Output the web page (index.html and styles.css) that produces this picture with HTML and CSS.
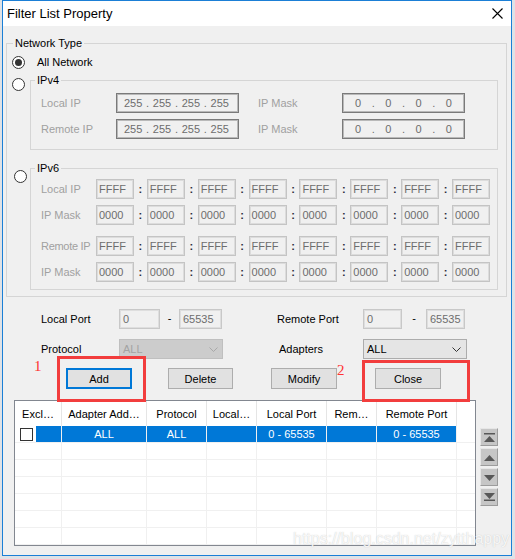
FILE: index.html
```html
<!DOCTYPE html>
<html lang="en">
<head>
    <meta charset="UTF-8">
    <title>Filter List Property</title>
    <link rel="stylesheet" href="styles.css">
</head>
<body>
<div class="window">
    <div class="titlebar">
        <span class="title">Filter List Property</span>
        <svg class="close" width="11" height="11" viewBox="0 0 11 11">
            <path d="M0.5 0.5L10.5 10.5M10.5 0.5L0.5 10.5" stroke="#000" stroke-width="1.1" fill="none"/>
        </svg>
    </div>

    <fieldset class="group">
        <legend>Network Type</legend>
        <div class="group-body">
            <div class="option-row">
                <span class="radio checked"></span>
                <span class="option-label">All Network</span>
            </div>

            <div class="net-option">
                <span class="radio"></span>
                <fieldset class="sub-group">
                    <legend>IPv4</legend>
                    <div class="v4-body">
                        <div class="v4-row">
                            <span class="dim">Local IP</span>
                            <div class="ip-box"><span>255</span><span>.</span><span>255</span><span>.</span><span>255</span><span>.</span><span>255</span></div>
                            <span class="dim mask-label">IP Mask</span>
                            <div class="ip-box mask"><span>0</span><span>.</span><span>0</span><span>.</span><span>0</span><span>.</span><span>0</span></div>
                        </div>
                        <div class="v4-row">
                            <span class="dim">Remote IP</span>
                            <div class="ip-box"><span>255</span><span>.</span><span>255</span><span>.</span><span>255</span><span>.</span><span>255</span></div>
                            <span class="dim mask-label">IP Mask</span>
                            <div class="ip-box mask"><span>0</span><span>.</span><span>0</span><span>.</span><span>0</span><span>.</span><span>0</span></div>
                        </div>
                    </div>
                </fieldset>
            </div>

            <div class="net-option v6">
                <span class="radio"></span>
                <fieldset class="sub-group">
                    <legend>IPv6</legend>
                    <div class="v6-body">
                        <div class="v6-row">
                            <span class="dim">Local IP</span>
                            <span class="hex">FFFF</span><span class="colon">:</span>
                            <span class="hex">FFFF</span><span class="colon">:</span>
                            <span class="hex">FFFF</span><span class="colon">:</span>
                            <span class="hex">FFFF</span><span class="colon">:</span>
                            <span class="hex">FFFF</span><span class="colon">:</span>
                            <span class="hex">FFFF</span><span class="colon">:</span>
                            <span class="hex">FFFF</span><span class="colon">:</span>
                            <span class="hex">FFFF</span>
                        </div>
                        <div class="v6-row">
                            <span class="dim">IP Mask</span>
                            <span class="hex">0000</span><span class="colon">:</span>
                            <span class="hex">0000</span><span class="colon">:</span>
                            <span class="hex">0000</span><span class="colon">:</span>
                            <span class="hex">0000</span><span class="colon">:</span>
                            <span class="hex">0000</span><span class="colon">:</span>
                            <span class="hex">0000</span><span class="colon">:</span>
                            <span class="hex">0000</span><span class="colon">:</span>
                            <span class="hex">0000</span>
                        </div>
                        <div class="v6-row split">
                            <span class="dim tight">Remote IP</span>
                            <span class="hex">FFFF</span><span class="colon">:</span>
                            <span class="hex">FFFF</span><span class="colon">:</span>
                            <span class="hex">FFFF</span><span class="colon">:</span>
                            <span class="hex">FFFF</span><span class="colon">:</span>
                            <span class="hex">FFFF</span><span class="colon">:</span>
                            <span class="hex">FFFF</span><span class="colon">:</span>
                            <span class="hex">FFFF</span><span class="colon">:</span>
                            <span class="hex">FFFF</span>
                        </div>
                        <div class="v6-row">
                            <span class="dim">IP Mask</span>
                            <span class="hex">0000</span><span class="colon">:</span>
                            <span class="hex">0000</span><span class="colon">:</span>
                            <span class="hex">0000</span><span class="colon">:</span>
                            <span class="hex">0000</span><span class="colon">:</span>
                            <span class="hex">0000</span><span class="colon">:</span>
                            <span class="hex">0000</span><span class="colon">:</span>
                            <span class="hex">0000</span><span class="colon">:</span>
                            <span class="hex">0000</span>
                        </div>
                    </div>
                </fieldset>
            </div>
        </div>
    </fieldset>

    <div class="port-row">
        <span class="lbl w78">Local Port</span>
        <span class="field w41">0</span>
        <span class="dash w19">-</span>
        <span class="field w43">65535</span>
        <span class="lbl w86 ml55">Remote Port</span>
        <span class="field w39">0</span>
        <span class="dash w24">-</span>
        <span class="field w39">65535</span>
    </div>

    <div class="port-row second">
        <span class="lbl w78">Protocol</span>
        <div class="combo disabled">
            <span>ALL</span>
            <svg width="9" height="5" viewBox="0 0 9 5"><polyline points="0.5,0.5 4.5,4.5 8.5,0.5" fill="none" stroke="#a8a8a8"/></svg>
        </div>
        <span class="lbl w84 ml56">Adapters</span>
        <div class="combo">
            <span>ALL</span>
            <svg width="9" height="5" viewBox="0 0 9 5"><polyline points="0.5,0.5 4.5,4.5 8.5,0.5" fill="none" stroke="#333"/></svg>
        </div>
    </div>

    <div class="button-row">
        <button class="btn default">Add</button>
        <button class="btn">Delete</button>
        <button class="btn">Modify</button>
        <button class="btn">Close</button>
    </div>

    <div class="list-area">
        <div class="listview">
            <div class="lv-head">
                <span>Excl…</span>
                <span>Adapter Add…</span>
                <span>Protocol</span>
                <span>Local…</span>
                <span>Local Port</span>
                <span>Rem…</span>
                <span>Remote Port</span>
                <span></span>
            </div>
            <div class="lv-row selected">
                <span class="first"><i class="check"></i><i class="sel-strip"></i></span>
                <span>ALL</span>
                <span>ALL</span>
                <span></span>
                <span>0 - 65535</span>
                <span></span>
                <span>0 - 65535</span>
                <span></span>
            </div>
            <div class="lv-row"><span></span><span></span><span></span><span></span><span></span><span></span><span></span><span></span></div>
            <div class="lv-row"><span></span><span></span><span></span><span></span><span></span><span></span><span></span><span></span></div>
            <div class="lv-row"><span></span><span></span><span></span><span></span><span></span><span></span><span></span><span></span></div>
            <div class="lv-row"><span></span><span></span><span></span><span></span><span></span><span></span><span></span><span></span></div>
            <div class="lv-row"><span></span><span></span><span></span><span></span><span></span><span></span><span></span><span></span></div>
            <div class="lv-row"><span></span><span></span><span></span><span></span><span></span><span></span><span></span><span></span></div>
        </div>
        <div class="scroll-btns">
            <span class="sbtn"><svg width="16" height="16" viewBox="0 0 16 16"><rect x="3" y="4" width="11" height="1.5" fill="#585858"/><polygon points="3,13 14,13 8.5,7" fill="#585858"/></svg></span>
            <span class="sbtn"><svg width="16" height="16" viewBox="0 0 16 16"><polygon points="3,12 14,12 8.5,6" fill="#585858"/></svg></span>
            <span class="sbtn"><svg width="16" height="16" viewBox="0 0 16 16"><polygon points="3,6 14,6 8.5,12" fill="#585858"/></svg></span>
            <span class="sbtn"><svg width="16" height="16" viewBox="0 0 16 16"><polygon points="3,4 14,4 8.5,10" fill="#585858"/><rect x="3" y="10.5" width="11" height="1.5" fill="#585858"/></svg></span>
        </div>
    </div>

    <!-- annotations drawn over the dialog -->
    <span class="mark-num one">1</span>
    <span class="mark-box box-add"></span>
    <span class="mark-num two">2</span>
    <span class="mark-box box-close"></span>
    <span class="watermark">https://blog.csdn.net/zytthappy</span>
</div>
</body>
</html>
```

FILE: styles.css
```css
* {
    box-sizing: border-box;
}
body {
    margin: 0;
    background-color: #dfe2e6;
    font-family: "Liberation Sans", Arial, sans-serif;
    font-size: 11px;
    color: #000;
}
.window {
    position: relative;
    margin-left: 2px;
    width: 510px;
    height: 556px;
    border: 1px solid #1b7fd6;
    background-color: #f0f0f0;
}
.titlebar {
    height: 25px;
    background-color: #fff;
    display: flex;
    align-items: center;
    justify-content: space-between;
    padding: 0 8px 0 4px;
}
.title {
    font-size: 13px;
}

/* group boxes */
.group {
    margin: 10px 4px 0 3px;
    padding: 0;
    border: 1px solid #d5d5d5;
    min-width: 0;
}
.group > legend {
    margin-left: 6px;
    padding: 0 2px;
    line-height: 14px;
}
.group-body {
    padding: 0 8px 6px 5px;
}
.option-row {
    display: flex;
    align-items: center;
    height: 14px;
    margin-top: 5px;
}
.option-label {
    margin-left: 12px;
}
.radio {
    width: 13px;
    height: 13px;
    border: 1px solid #333;
    border-radius: 50%;
    background-color: #fff;
    display: flex;
    align-items: center;
    justify-content: center;
}
.radio.checked::after {
    content: "";
    width: 7px;
    height: 7px;
    border-radius: 50%;
    background-color: #333;
}
.net-option {
    display: grid;
    grid-template-columns: 18px 1fr;
    align-items: start;
    margin-top: 4px;
}
.net-option .radio {
    margin-top: 5px;
}
.net-option.v6 {
    margin-top: 11px;
}
.net-option.v6 .radio {
    margin-top: 9px;
    margin-left: 2px;
}
.sub-group {
    margin: 0;
    padding: 0;
    border: 1px solid #d5d5d5;
    min-width: 0;
}
.sub-group legend {
    margin-left: 4px;
    padding: 0 2px;
    line-height: 14px;
}
.dim {
    color: #a0a0a0;
    white-space: nowrap;
}
.dim.tight {
    letter-spacing: -0.3px;
}

/* ipv4 */
.v4-body {
    padding: 6px 7px 10px 10px;
}
.v4-row {
    display: grid;
    grid-template-columns: 75px 123px 103px 123px;
    height: 20px;
    align-items: center;
}
.v4-row + .v4-row {
    margin-top: 6px;
}
.mask-label {
    padding-left: 19px;
}
.ip-box {
    height: 20px;
    display: flex;
    align-items: center;
    justify-content: space-between;
    padding: 0 9px 0 7px;
    border: 1px solid #7a7a7a;
    box-shadow: inset 0 0 0 1px #b9b9b9;
    color: #6d6d6d;
}
.ip-box.mask {
    padding: 0 12px;
}

/* ipv6 */
.v6-body {
    padding: 4px 7px 7px 10px;
}
.v6-row {
    display: grid;
    grid-template-columns: 55px repeat(7, 38px 1fr) 38px;
    height: 20px;
    align-items: center;
}
.v6-row + .v6-row {
    margin-top: 6px;
}
.v6-row.split {
    margin-top: 11px;
}
.hex {
    height: 20px;
    display: flex;
    align-items: center;
    padding-left: 2px;
    border: 1px solid #c4c4c4;
    box-shadow: inset 0 0 0 1px #dcdcdc;
    color: #6d6d6d;
}
.colon {
    text-align: center;
    font-weight: bold;
    color: #2a2a3a;
}

/* ports / protocol */
.port-row {
    display: flex;
    align-items: center;
    height: 20px;
    margin: 12px 0 0 38px;
}
.port-row.second {
    margin-top: 10px;
}
.lbl {
    white-space: nowrap;
}
.w78 { width: 78px; }
.w84 { width: 84px; }
.w86 { width: 86px; }
.w41 { width: 41px; }
.w43 { width: 43px; }
.w39 { width: 39px; }
.w19 { width: 19px; }
.w24 { width: 24px; }
.ml55 { margin-left: 55px; }
.ml56 { margin-left: 56px; }
.field {
    height: 20px;
    display: flex;
    align-items: center;
    padding-left: 3px;
    border: 1px solid #c8c8c8;
    box-shadow: inset 0 0 0 1px #dedede;
    color: #6d6d6d;
}
.dash {
    text-align: center;
    padding-bottom: 3px;
}
.combo {
    width: 104px;
    height: 20px;
    display: flex;
    align-items: center;
    justify-content: space-between;
    padding: 0 5px 0 3px;
    border: 1px solid #acacac;
    background-color: #e5e5e5;
}
.combo.disabled {
    background-color: #cccccc;
    border-color: #bfbfbf;
    color: #a3a3a3;
    padding-right: 4px;
}

/* buttons */
.button-row {
    display: flex;
    margin: 9px 0 0 63px;
}
.btn {
    width: 66px;
    height: 21px;
    margin-right: 36px;
    padding: 0;
    font-family: "Liberation Sans", Arial, sans-serif;
    font-size: 11px;
    color: #000;
    background-color: #e1e1e1;
    border: 1px solid #adadad;
}
.btn:nth-child(2) {
    width: 65px;
    margin-right: 38px;
}
.btn:nth-child(3) {
    margin-right: 38px;
}
.btn.default {
    border: 2px solid #0078d7;
}

/* list view */
.list-area {
    display: flex;
    margin: 11px 0 0 11px;
}
.listview {
    width: 462px;
    height: 146px;
    border: 1px solid #828790;
    background-color: #fff;
}
.lv-head,
.lv-row {
    display: grid;
    grid-template-columns: 47px 85px 60px 50px 70px 50px 80px 1fr;
}
.lv-head {
    height: 25px;
}
.lv-head span {
    display: flex;
    align-items: center;
    justify-content: center;
    white-space: nowrap;
    overflow: hidden;
    border-right: 1px solid #e5e5e5;
}
.lv-head span:last-child {
    border-right: none;
}
.lv-row {
    height: 17px;
}
.lv-row span {
    display: flex;
    align-items: center;
    justify-content: center;
    border-right: 1px solid #f0f0f0;
    border-bottom: 1px solid #f0f0f0;
}
.lv-row span:last-child {
    border-right: none;
}
.lv-row.selected span {
    background-color: #0078d7;
    color: #fff;
}
.lv-row.selected span.first,
.lv-row.selected span:last-child {
    background-color: #fff;
    justify-content: flex-start;
}
.check {
    width: 13px;
    height: 13px;
    margin-left: 5px;
    border: 1px solid #333;
    background-color: #fff;
}
.sel-strip {
    flex: 1;
    align-self: stretch;
    margin-left: 3px;
    background-color: #0078d7;
}
.scroll-btns {
    display: flex;
    flex-direction: column;
    gap: 2px;
    margin: 28px 0 0 4px;
}
.sbtn {
    width: 18px;
    height: 18px;
    border: 1px solid;
    border-color: #e6e6e6 #9c9c9c #9c9c9c #e6e6e6;
    background-color: #c6c6c6;
}
.sbtn svg {
    display: block;
}

/* red marks + watermark */
.mark-box {
    position: absolute;
    border: 3px solid #f23d3d;
}
.box-add {
    left: 54px;
    top: 355px;
    width: 89px;
    height: 46px;
}
.box-close {
    left: 359px;
    top: 359px;
    width: 108px;
    height: 42px;
}
.mark-num {
    position: absolute;
    font-family: "Liberation Serif", serif;
    font-size: 15px;
    line-height: 15px;
    color: #f33;
}
.mark-num.one {
    left: 31px;
    top: 358px;
}
.mark-num.two {
    left: 334px;
    top: 362px;
}
.watermark {
    position: absolute;
    left: 290px;
    top: 530px;
    font-size: 16px;
    line-height: 16px;
    color: rgba(255, 255, 255, 0.85);
    text-shadow: 0 0 1px rgba(150, 150, 150, 0.55);
    white-space: nowrap;
}
```
